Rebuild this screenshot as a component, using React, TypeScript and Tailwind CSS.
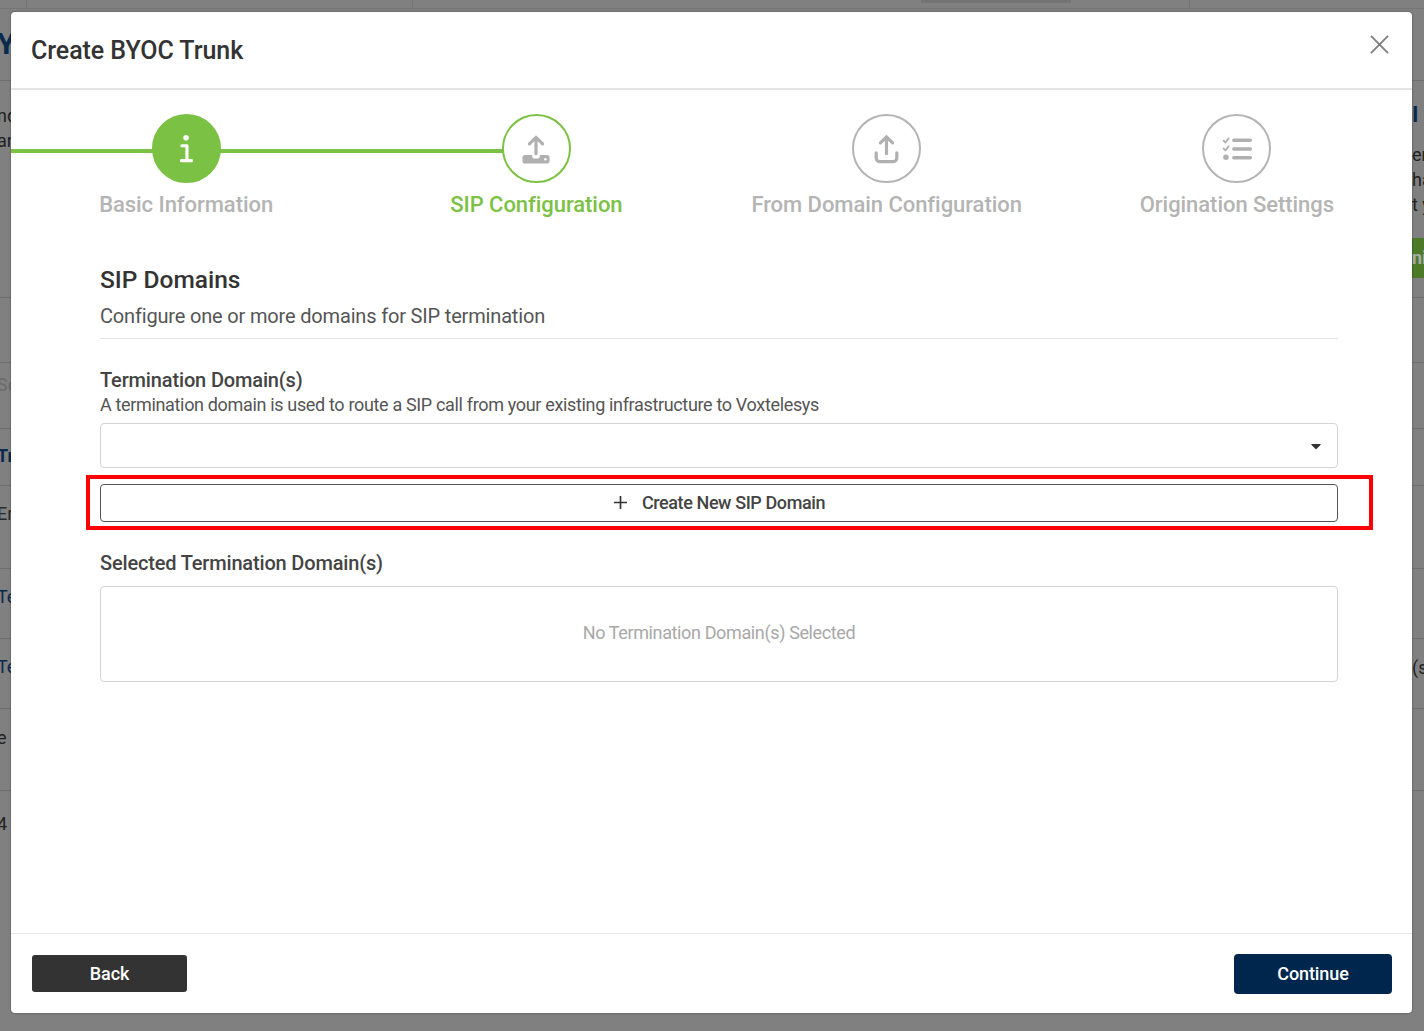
import { FaCaretDown } from 'react-icons/fa'

const bgRows = [
  { h: 'h-[72px]', left: <span className="text-[30px] font-bold text-[#0a2a4d] leading-[70px]">Y</span>, right: null },
  { h: 'h-[217px]', left: <div className="pt-[22px] text-[18px] leading-[25px] text-[#222]"><p>nd</p><p>an</p></div>, right: (
    <div className="pt-[21px] text-[18px] leading-[25px] text-[#222]">
      <p className="text-[22px] font-bold text-[#0a2a4d]">I I</p>
      <p className="mt-[15px]">er</p><p>ha</p><p>t y</p>
      <p className="mt-[21px] h-[40px] bg-[#4d7a28] text-[#aaa] font-bold leading-[40px]">nit</p>
    </div>
  ) },
  { h: 'h-[65px]', left: null, right: null },
  { h: 'h-[66px]', left: <span className="text-[#6a6a6a] text-[18px] leading-[44px]">Se</span>, right: null },
  { h: 'h-[57px]', left: <span className="font-bold text-[#0a2a4d] text-[18px] leading-[54px]">Tr</span>, right: null },
  { h: 'h-[83px]', left: <span className="text-[#2b2b2b] text-[18px] leading-[56px]">Er</span>, right: null },
  { h: 'h-[70px]', left: <span className="text-[#0a2a4d] text-[18px] leading-[56px]">Te</span>, right: null },
  { h: 'h-[70px]', left: <span className="text-[#0a2a4d] text-[18px] leading-[56px]">Te</span>, right: <span className="text-[#222] text-[18px] leading-[58px]">(s)</span> },
  { h: 'h-[82px]', left: <span className="text-[#222] text-[18px] leading-[58px]">e</span>, right: null },
]

const InfoIcon = () => (
  <svg viewBox="0 0 14 30" className="w-[13px] h-[28px]" fill="none" stroke="#fff" strokeWidth="3.400" strokeLinecap="round" strokeLinejoin="round">
    <circle cx="6.500" cy="3" r="3" fill="#fff" stroke="none" />
    <path d="M2 11.500h5.500v16M1.500 27.500h11" />
  </svg>
)

const DriveUploadIcon = () => (
  <svg viewBox="0 0 30 32" className="w-[30px] h-[30px]">
    <path d="M15 21V4M8 10.500 15 3.500l7 7" fill="none" stroke="#b0b0b0" strokeWidth="3.400" strokeLinecap="round" strokeLinejoin="round" />
    <path d="M3.500 22.500H11v1.500a2 2 0 0 0 2 2h4a2 2 0 0 0 2-2v-1.500h7.500a3 3 0 0 1 3 3v3a3 3 0 0 1-3 3h-23a3 3 0 0 1-3-3v-3a3 3 0 0 1 3-3z" fill="#b0b0b0" />
    <circle cx="25" cy="27" r="1.300" fill="#fff" />
  </svg>
)

const TrayUploadIcon = () => (
  <svg viewBox="0 0 28 32" className="w-[27px] h-[30px]" fill="none" stroke="#b0b0b0" strokeWidth="3.400" strokeLinecap="round" strokeLinejoin="round">
    <path d="M14 21V3.500M7.500 9.500 14 3l6.500 6.500" />
    <path d="M3 20v5.500a4 4 0 0 0 4 4h14a4 4 0 0 0 4-4V20" />
  </svg>
)

const ChecklistIcon = () => (
  <svg viewBox="0 0 32 26" className="w-[30px] h-[24px]" fill="none" stroke="#b0b0b0" strokeLinecap="round" strokeLinejoin="round">
    <path d="M1.500 4 3.500 6 7 1.500M1.500 12.500 3.500 14.500 7 10" strokeWidth="2" />
    <circle cx="4" cy="22" r="3" fill="#b0b0b0" strokeWidth="0" />
    <path d="M12.500 3.500h18M12.500 13h18M12.500 22.500h18" strokeWidth="3.600" />
  </svg>
)

const steps = [
  { label: 'Basic Information', icon: <InfoIcon />, circle: 'bg-[#7bc143] border-[#7bc143]', text: 'text-[#b4b4b4]' },
  { label: 'SIP Configuration', icon: <DriveUploadIcon />, circle: 'bg-white border-[#7bc143]', text: 'text-[#7bc143]' },
  { label: 'From Domain Configuration', icon: <TrayUploadIcon />, circle: 'bg-white border-[#b4b4b4]', text: 'text-[#b4b4b4]' },
  { label: 'Origination Settings', icon: <ChecklistIcon />, circle: 'bg-white border-[#b4b4b4]', text: 'text-[#b4b4b4]' },
]

function Stepper() {
  return (
    <div className="relative grid grid-cols-4 pt-[24px] h-[135px]">
      {/* progress line behind the first two circles */}
      <div className="absolute left-0 top-[59px] h-[4px] w-[500px] bg-[#7bc143]" />
      {steps.map(step => (
        <div key={step.label} className="relative flex flex-col items-center">
          <div className={`size-[69px] rounded-full border-2 flex items-center justify-center ${step.circle}`}>
            {step.icon}
          </div>
          <p className={`mt-[7px] text-[22px] leading-[30px] font-medium whitespace-nowrap tracking-[-0.05px] ${step.text}`}>{step.label}</p>
        </div>
      ))}
    </div>
  )
}

export default function App() {
  return (
    <div className="relative h-[1031px] w-[1424px] overflow-hidden bg-[#808080] font-['Roboto',sans-serif]">
      {/* page behind the dialog */}
      <div className="flex flex-col">
        <div className="h-[9px] flex border-b border-[#747474]">
          <div className="w-[27px] border-r border-[#747474]" />
          <div className="w-[386px] border-r border-[#747474]" />
          <div className="w-[508px]" />
          <div className="w-[150px] h-[3px] bg-[#747474]" />
          <div className="w-[119px] border-r border-[#747474]" />
        </div>
        {bgRows.map((row, ix) => (
          <div key={'bgRow' + ix} className={`${row.h} shrink-0 flex justify-between border-b border-[#6e6e6e]`}>
            <div className="w-[14px] -ml-[3px] overflow-hidden whitespace-nowrap">{row.left}</div>
            <div className="w-[12px] overflow-hidden whitespace-nowrap">{row.right}</div>
          </div>
        ))}
        <div className="h-[70px] flex">
          <div className="w-[14px] -ml-[3px] overflow-hidden text-[#222] text-[18px] leading-[66px]">4</div>
        </div>
      </div>

      <div className="absolute left-[11px] top-[12px] w-[1401px] h-[1001px] bg-white rounded-[4px] flex flex-col shadow-[0_0_2px_rgba(0,0,0,0.5)]">
        <header className="h-[78px] shrink-0 flex items-start justify-between border-b-2 border-[#e4e4e4] pl-[20px] pr-[23px]">
          <h1 className="mt-[23px] text-[25px] leading-[32px] font-medium text-[#333] tracking-[-0.05px]">Create BYOC Trunk</h1>
          <svg viewBox="0 0 20 20" className="mt-[23px] size-[19px]" fill="none" stroke="#808080" strokeWidth="2">
            <path d="M1 1l18 18M19 1 1 19" />
          </svg>
        </header>

        <Stepper />

        <main className="flex-1 pl-[89px] pr-[74px] pt-[40px] text-[#333]">
          <div className="border-b border-[#e4e4e4] h-[74px]">
            <h2 className="text-[24.500px] leading-[30px] font-medium">SIP Domains</h2>
            <p className="mt-[7px] text-[20px] leading-[28px] text-[#555] tracking-[-0.17px]">Configure one or more domains for SIP termination</p>
          </div>

          <p className="mt-[29px] text-[20px] leading-[25px] font-medium text-[#444] tracking-[-0.15px]">Termination Domain(s)</p>
          <p className="text-[18px] leading-[24px] text-[#555] tracking-[-0.34px]">A termination domain is used to route a SIP call from your existing infrastructure to Voxtelesys</p>

          <div className="mt-[6px] h-[45px] rounded-[4px] border border-[#d4d4d4] flex items-center justify-end pr-[13px]">
            <FaCaretDown className="size-[16px] text-[#333]" />
          </div>

          <div className="relative mt-[16px] h-[38px]">
            <button className="w-full h-full rounded-[4px] border border-[#555] flex items-center justify-center gap-[14px] pb-[2px] text-[18px] font-medium text-[#444] tracking-[-0.4px]">
              <svg viewBox="0 0 16 16" className="size-[15px]" fill="none" stroke="#333" strokeWidth="1.800">
                <path d="M8 1v14M1 8h14" />
              </svg>
              Create New SIP Domain
            </button>
            {/* red annotation box */}
            <div className="absolute -left-[14px] -right-[35px] -top-[9px] -bottom-[8px] border-4 border-[#ff0000]" />
          </div>

          <p className="mt-[27px] text-[20px] leading-[28px] font-medium text-[#444] tracking-[-0.17px]">Selected Termination Domain(s)</p>

          <div className="mt-[9px] h-[96px] rounded-[4px] border border-[#d4d4d4] flex items-center justify-center pb-[3px] text-[18px] text-[#a8a8a8] tracking-[-0.37px]">
            No Termination Domain(s) Selected
          </div>
        </main>

        <footer className="h-[80px] shrink-0 border-t border-[#e8e8e8] flex items-center justify-between pl-[21px] pr-[20px]">
          <button className="w-[155px] h-[37px] rounded-[3px] bg-[#333] text-white text-[18px] font-medium tracking-[-0.1px]">Back</button>
          <button className="w-[158px] h-[40px] rounded-[4px] bg-[#00264d] text-white text-[18px] font-medium tracking-[-0.1px]">Continue</button>
        </footer>
      </div>
    </div>
  )
}
